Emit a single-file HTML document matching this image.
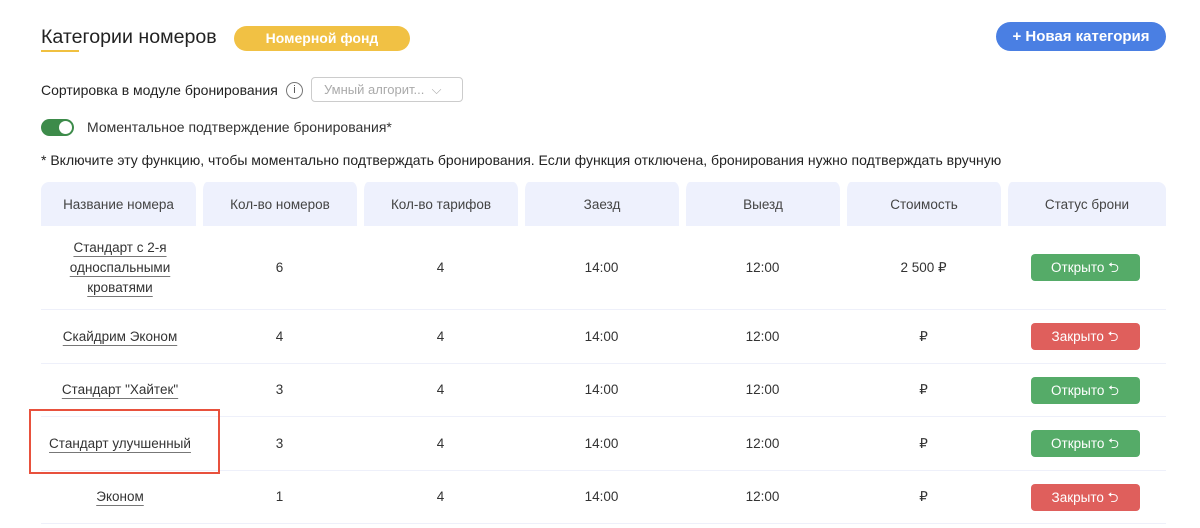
<!DOCTYPE html>
<html><head><meta charset="utf-8"><style>
*{box-sizing:border-box;margin:0;padding:0}
body{width:1200px;height:528px;background:#fff;font-family:"Liberation Sans",sans-serif;color:#333;position:relative;overflow:hidden}
.a{position:absolute}
.title{left:41px;top:26px;font-size:19.6px;color:#222}
.uline{left:41px;top:50px;width:38px;height:2px;background:#f0c040}
.pill{left:234px;top:26px;width:176px;height:25px;border-radius:13px;background:#f1c144;color:#fff;font-size:14px;text-align:center;line-height:25px;font-weight:bold}
.btn{left:996px;top:22px;width:170px;height:29px;border-radius:15px;background:#4a7fe3;color:#fff;font-size:15px;text-align:center;line-height:29px;font-weight:bold}
.sort{left:41px;top:82px;font-size:14px;color:#222}
.info{left:286px;top:82px;width:17px;height:17px;border:1px solid #777;border-radius:50%;font-size:11px;text-align:center;line-height:15px;color:#555}
.sel{left:311px;top:77px;width:152px;height:25px;border:1px solid #ccc;border-radius:4px;font-size:13px;color:#aaa;line-height:23px;padding-left:12px}
.tog{left:41px;top:119px;width:33px;height:17px;border-radius:9px;background:#3d8b4a}
.tog i{position:absolute;right:2px;top:2px;width:13px;height:13px;border-radius:50%;background:#fff}
.tl{left:87px;top:119px;font-size:14px;color:#333}
.note{left:41px;top:152px;font-size:14px;color:#222;white-space:nowrap}
table{position:absolute;left:41px;top:182px;width:1125px;table-layout:fixed;border-collapse:separate;border-spacing:0}
th{background:#eef1fd;font-weight:normal;font-size:13.5px;color:#444;height:44px;border-radius:8px 8px 0 0;border-left:4px solid #fff;border-right:3px solid #fff}
th:first-child{border-left:0}th:last-child{border-right:0}
td{text-align:center;font-size:13.5px;color:#333;border-bottom:1px solid #eef0fa;line-height:20px}
td u{text-decoration:underline;text-decoration-color:#777;text-underline-offset:4px}
.s{display:inline-block;width:109px;height:27px;border-radius:4px;color:#fff;font-size:13.5px;line-height:27px}
.o{background:#55ab68}.c{background:#df5f5c}
.red{left:29px;top:409px;width:191px;height:65px;border:2px solid #e8513d}
</style></head><body>
<div class="a title">Категории номеров</div><div class="a uline"></div>
<div class="a pill">Номерной фонд</div>
<div class="a btn">+ Новая категория</div>
<div class="a sort">Сортировка в модуле бронирования</div>
<div class="a info">i</div>
<div class="a sel">Умный алгорит... &nbsp;⌵</div>
<div class="a tog"><i></i></div>
<div class="a tl">Моментальное подтверждение бронирования*</div>
<div class="a note">* Включите эту функцию, чтобы моментально подтверждать бронирования. Если функция отключена, бронирования нужно подтверждать вручную</div>
<table>
<colgroup><col style="width:158px"><col style="width:161px"><col style="width:161px"><col style="width:161px"><col style="width:161px"><col style="width:161px"><col style="width:162px"></colgroup>
<tr><th>Название номера</th><th>Кол-во номеров</th><th>Кол-во тарифов</th><th>Заезд</th><th>Выезд</th><th>Стоимость</th><th>Статус брони</th></tr>
<tr style="height:84px"><td><u>Стандарт с 2-я</u><br><u>односпальными</u><br><u>кроватями</u></td><td>6</td><td>4</td><td>14:00</td><td>12:00</td><td>2 500 ₽</td><td><span class="s o">Открыто ⮌</span></td></tr>
<tr style="height:54px"><td><u>Скайдрим Эконом</u></td><td>4</td><td>4</td><td>14:00</td><td>12:00</td><td>₽</td><td><span class="s c">Закрыто ⮌</span></td></tr>
<tr style="height:53px"><td><u>Стандарт "Хайтек"</u></td><td>3</td><td>4</td><td>14:00</td><td>12:00</td><td>₽</td><td><span class="s o">Открыто ⮌</span></td></tr>
<tr style="height:54px"><td><u>Стандарт улучшенный</u></td><td>3</td><td>4</td><td>14:00</td><td>12:00</td><td>₽</td><td><span class="s o">Открыто ⮌</span></td></tr>
<tr style="height:53px"><td><u>Эконом</u></td><td>1</td><td>4</td><td>14:00</td><td>12:00</td><td>₽</td><td><span class="s c">Закрыто ⮌</span></td></tr>
</table>
<div class="a red"></div>
</body></html>
